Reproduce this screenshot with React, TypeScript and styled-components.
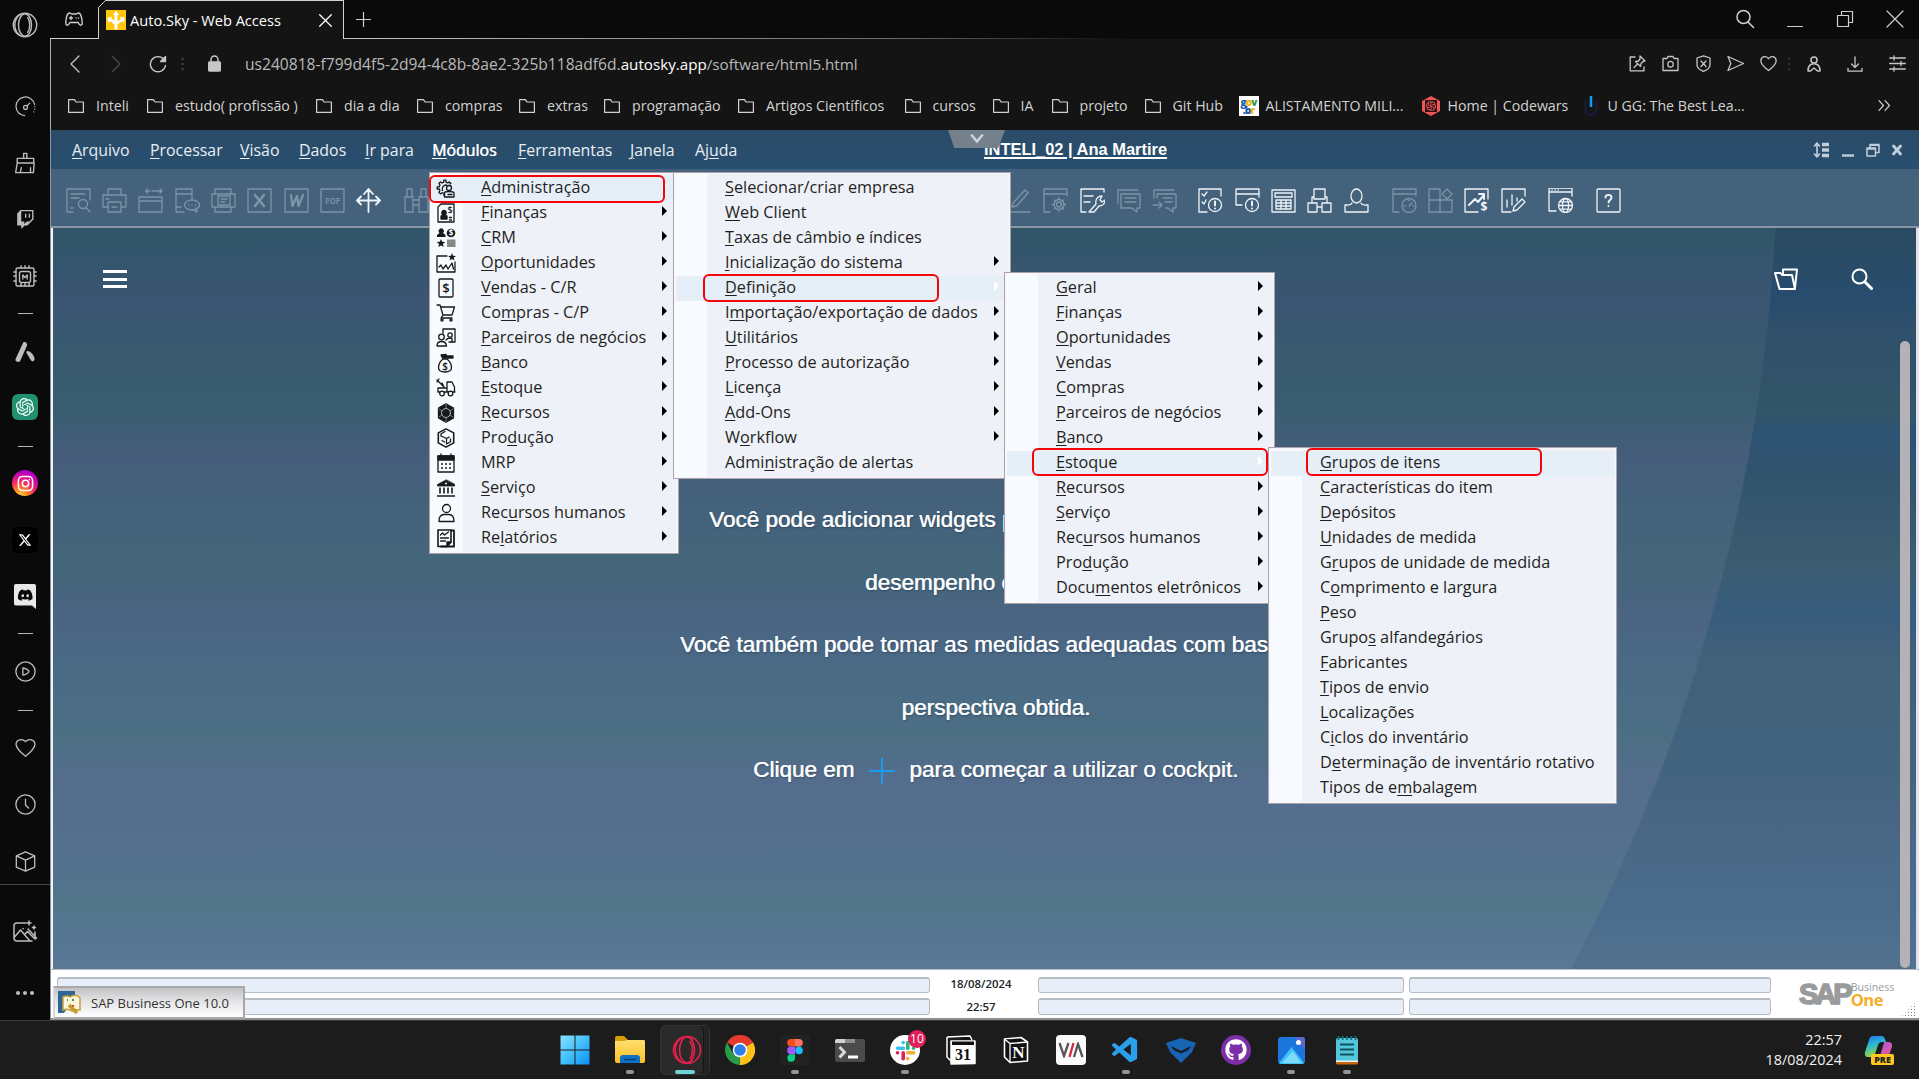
import React from 'react';
import styled, { createGlobalStyle, css } from 'styled-components';
import { SiOpenai, SiCodewars } from 'react-icons/si';
import { FaDiscord, FaGithub, FaXTwitter } from 'react-icons/fa6';
import { BsTwitch } from 'react-icons/bs';
import { VscVscode } from 'react-icons/vsc';

const uiFont = '"Open Sans", "Noto Sans", sans-serif';

const GlobalStyle = createGlobalStyle`
  *, *::before, *::after { box-sizing: border-box; }
  html, body { margin: 0; padding: 0; background: #0a0a0a; overflow: hidden; }
  body { font-family: ${uiFont}; }
  svg { display: block; flex: none; }
`;

/* ---------- generic drawing helper ---------- */

type GlyphProps = {
  size?: number;
  w?: number;
  h?: number;
  sw?: number;
  box?: string;
  fill?: string;
  children: React.ReactNode;
};

const Glyph = ({ size = 24, w, h, sw = 1.5, box = '0 0 24 24', fill = 'none', children }: GlyphProps) => (
  <svg width={w ?? size} height={h ?? size} viewBox={box} fill={fill} stroke="currentColor" strokeWidth={sw} strokeLinecap="round" strokeLinejoin="round">
    {children}
  </svg>
);

/* ---------- page ---------- */

const Screen = styled.div`
  width: 1919px;
  height: 1079px;
  display: flex;
  flex-direction: column;
  position: relative;
  overflow: hidden;
  background: #0a0a0a;
`;

const Desktop = styled.div`
  display: flex;
  height: 1020px;
`;

const Main = styled.div`
  width: 1869px;
  display: flex;
  flex-direction: column;
`;

/* ---------- browser sidebar ---------- */

const SideBar = styled.nav`
  width: 50px;
  display: flex;
  flex-direction: column;
  background: #0a0a0a;
  color: #bdbdbd;
`;

const SideSlot = styled.div<{ $h: number; $gap?: number }>`
  height: ${(p) => p.$h}px;
  margin-top: ${(p) => p.$gap ?? 0}px;
  display: flex;
  align-items: center;
  justify-content: center;
`;

const SideDash = styled.i`
  width: 15px;
  height: 1px;
  background: #b5b5b5;
`;

const SideRule = styled.div`
  height: 1px;
  background: #4a4a4a;
`;

const AppBadge = styled.span<{ $bg: string; $round?: boolean }>`
  width: 26px;
  height: 26px;
  border-radius: ${(p) => (p.$round ? '50%' : '6px')};
  background: ${(p) => p.$bg};
  color: #fff;
  display: flex;
  align-items: center;
  justify-content: center;
`;

const OperaRing = ({ size, sw }: { size: number; sw: number }) => (
  <Glyph size={size} sw={sw}>
    <circle cx="12" cy="12" r="10.8" />
    <ellipse cx="12" cy="12" rx="6" ry="10.4" />
    <path d="M7.500 2.300C3.800 5 2.600 9 2.600 12s1.200 7 4.900 9.700M14.500 5.200C15.800 7 16.400 9.500 16.400 12s-.6 5-1.900 6.800" />
  </Glyph>
);

const Chip = () => (
  <Glyph size={24} sw={1.4}>
    <rect x="3" y="3" width="18" height="18" rx="1.500" />
    <rect x="6.500" y="6.500" width="11" height="11" rx="2" />
    <path d="M8 3V.8M12 3V.8M16 3V.8M8 21v-3M16 21v-3M12 21v-3M3 7H.8M3 11H.8M3 16H.8M23.200 7H21M23.200 11H21M23.200 16H21M9.800 14v-4l2.200 2.500 2.200-2.500v4" />
  </Glyph>
);

const Sidebar = () => (
  <SideBar>
    <SideSlot $h={50}><OperaRing size={26} sw={1.300} /></SideSlot>
    <SideSlot $h={56} $gap={28}>
      <Glyph size={21} sw={1.400}>
        <path d="M11 22.500A10.700 10.700 0 1 1 22.300 9.500" /><circle cx="12" cy="13" r="2.200" /><path d="m13.600 11.400 3.200-3.200M22.500 12v.2M22.500 15v.2M21.500 18v.2" />
      </Glyph>
    </SideSlot>
    <SideSlot $h={57}>
      <Glyph size={22} sw={1.500}>
        <path d="M10.500 7V1.500h3.500V7M3.500 7h18v5h-18zM3.500 12 1.800 22.500h19.400L22 12M7 22l1-5M18 22v-5" />
      </Glyph>
    </SideSlot>
    <SideSlot $h={57}><BsTwitch size={19} /></SideSlot>
    <SideSlot $h={57}><Chip /></SideSlot>
    <SideSlot $h={17}><SideDash /></SideSlot>
    <SideSlot $h={60}>
      <Glyph size={20} sw={0} box="0 0 20 20">
        <path fill="currentColor" d="M8.200.6c1-1 3-.4 3.400 1l.6 1.400L5.200 19c-.6 1.300-4 1.200-4.700-.4-.2-.6 0-1.400.3-2zM11.500 11c-.4-1.200.4-2.200 1.500-2 3.500.8 6 4.500 6.500 7.500.3 2-1.600 3.600-3.300 2.300z" />
      </Glyph>
    </SideSlot>
    <SideSlot $h={46} $gap={2}><AppBadge $bg="#1f9170"><SiOpenai size={18} /></AppBadge></SideSlot>
    <SideSlot $h={28} $gap={2}><SideDash /></SideSlot>
    <SideSlot $h={46}>
      <AppBadge $round $bg="radial-gradient(circle at 30% 105%, #ffc93c 8%, #ff8a1c 24%, #fb2b5d 46%, #c800b4 72%, #7a12e0 95%)">
        <Glyph size={17} sw={2.200}><rect x="2" y="2" width="20" height="20" rx="6" /><circle cx="12" cy="12" r="4.500" /><path d="M17.500 6.300v.2" /></Glyph>
      </AppBadge>
    </SideSlot>
    <SideSlot $h={67}><AppBadge $bg="#000"><FaXTwitter size={14} /></AppBadge></SideSlot>
    <SideSlot $h={46}>
      <Glyph size={26} sw={0} box="0 0 26 26">
        <path fill="#e8e8e8" d="M4 1h18c1.300 0 2 .7 2 2v23l-4-3.500H4c-1.300 0-2-.7-2-2V3c0-1.300.7-2 2-2z" />
        <g transform="translate(5.200 4.200)"><FaDiscord size={16} color="#0a0a0a" /></g>
      </Glyph>
    </SideSlot>
    <SideSlot $h={28}><SideDash /></SideSlot>
    <SideSlot $h={48}><Glyph size={21} sw={1.500}><circle cx="12" cy="12" r="11" /><path d="M9 8v8c4-.5 6-2 7-4-1-2-3-3.500-7-4z" /></Glyph></SideSlot>
    <SideSlot $h={30}><SideDash /></SideSlot>
    <SideSlot $h={44}>
      <Glyph size={21} sw={1.500}><path d="M12 22C7 18 1.200 13.500 1.200 8.300 1.200 3 8.500 1 12 5.300 15.500 1 22.800 3 22.800 8.300 22.800 13.500 17 18 12 22z" /></Glyph>
    </SideSlot>
    <SideSlot $h={70}><Glyph size={21} sw={1.500}><circle cx="12" cy="12" r="11" /><path d="M12 6v6.500l3.500 3.500" /></Glyph></SideSlot>
    <SideSlot $h={45}><Glyph size={21} sw={1.500}><path d="m12 1 10.500 4.500v13L12 23 1.500 18.500v-13zM1.500 5.500 12 10.500l10.500-5M12 10.500V23" /></Glyph></SideSlot>
    <SideRule />
    <SideSlot $h={93}>
      <Glyph size={24} sw={1.500}><path d="M13 3H4Q1 3 1 6v12q0 3 3 3h15M1.500 17l6-7L17 21M12 14l2.500-2.500L22 19V12M15 9l9 9.500" /><path d="M10 8.500v.2M16 1v4M14 3h4M21 6v3M19.500 7.500h3" /></Glyph>
    </SideSlot>
    <SideSlot $h={30}><Glyph w={20} h={6} box="0 0 20 6" sw={0} fill="currentColor"><circle cx="3" cy="3" r="2" /><circle cx="10" cy="3" r="2" /><circle cx="17" cy="3" r="2" /></Glyph></SideSlot>
  </SideBar>
);

/* ---------- browser chrome ---------- */

const TabStrip = styled.header`
  height: 39px;
  display: flex;
  align-items: stretch;
  color: #cfcfcf;
`;

const GameCorner = styled.div`
  width: 48px;
  display: flex;
  align-items: center;
  justify-content: center;
  border-bottom: 1px solid #d0d0d0;
`;

const Tab = styled.div`
  width: 246px;
  display: flex;
  align-items: center;
  padding: 0 11px 0 7px;
  border: 1px solid #d0d0d0;
  border-bottom: 0;
  background: #141414;
  color: #fff;
  position: relative;
  &::before {
    content: '';
    position: absolute;
    left: -1px;
    top: -1px;
    width: 8px;
    height: 8px;
    background: linear-gradient(135deg, #0a0a0a 5px, #d0d0d0 5px, #d0d0d0 6px, transparent 6px);
  }
`;

const TabTitle = styled.span`
  flex: 1;
  padding-left: 4px;
  font-size: 14.600px;
  white-space: nowrap;
`;

const StripRest = styled.div`
  flex: 1;
  display: flex;
  align-items: center;
  padding: 0 14px 0 12px;
  border-bottom: 1px solid;
  border-image: linear-gradient(90deg, #c4c4c4, #6a6a6a 35%, #0a0a0a 50%) 1;
`;

const Spacer = styled.span`
  flex: 1;
`;

const WindowButtons = styled.div`
  display: flex;
  gap: 30px;
  align-items: center;
`;

const AddressBar = styled.div`
  height: 51px;
  display: flex;
  align-items: center;
  background: #141414;
  padding: 0 1px 2px 13px;
  color: #c6c6c6;
  border-left: 1px solid #b0b0b0;
`;

const NavButton = styled.span<{ $w: number; $dim?: boolean }>`
  width: ${(p) => p.$w}px;
  display: flex;
  justify-content: center;
  color: ${(p) => (p.$dim ? '#4a4a4a' : '#c6c6c6')};
`;

const Url = styled.span`
  margin-left: 11px;
  font-size: 15.600px;
  color: #b9b9b9;
  white-space: nowrap;
`;

const UrlPart = styled.span<{ $host?: boolean }>`
  font-size: 15.200px;
  color: ${(p) => (p.$host ? '#fff' : 'inherit')};
`;

const AddressActions = styled.div`
  display: flex;
  align-items: center;
`;

const Bookmarks = styled.div`
  height: 40px;
  display: flex;
  align-items: center;
  padding: 0 28px 9px 17px;
  background: #141414;
  border-left: 1px solid #b0b0b0;
  color: #d2d2d2;
`;

const Bookmark = styled.div<{ $site?: boolean }>`
  display: flex;
  align-items: center;
  gap: ${(p) => (p.$site ? 7 : 12)}px;
  margin-right: ${(p) => (p.$site ? 16 : 18)}px;
`;

const BookmarkLabel = styled.span<{ $w: number }>`
  width: ${(p) => p.$w}px;
  font-size: 14.200px;
  white-space: nowrap;
`;

const SiteIcon = styled.span<{ $bg?: string }>`
  width: 20px;
  height: 20px;
  background: ${(p) => p.$bg ?? 'transparent'};
  display: flex;
  align-items: center;
  justify-content: center;
`;

const GovMark = styled.span`
  display: grid;
  font: 800 10px/8px ${uiFont};
  letter-spacing: -0.800px;
  color: #1c57b8;
  text-align: center;
`;

const GovTint = styled.span<{ $c: string }>`
  color: ${(p) => p.$c};
`;

const folders: [string, number][] = [
  ['Inteli', 33], ['estudo( profissão )', 123], ['dia a dia', 55], ['compras', 56], ['extras', 39], ['programação', 88],
  ['Artigos Científicos', 120.500], ['cursos', 42], ['IA', 13], ['projeto', 47], ['Git Hub', 48],
];

const BrowserChrome = () => (
  <>
    <TabStrip>
      <GameCorner>
        <Glyph w={18} h={15} box="0 0 18 15" sw={1.400}><path d="M4.500 1C2 1 .8 7 .8 11c0 3 2.500 3 4-.5h8.400c1.500 3.500 4 3.500 4 .5 0-4-1.200-10-3.700-10-1.200 0-1.500 1-2.500 1H7C6 2 5.700 1 4.500 1zM6 4.500v3M4.500 6h3M11 6h.1M13.500 6h.1" /></Glyph>
      </GameCorner>
      <Tab>
        <Glyph size={20} sw={0} box="0 0 20 20">
          <rect width="20" height="20" fill="#ffc60a" />
          <path fill="#fff" d="M8.500 19.500v-5L4 11l-1 2.500L.8 8 6 6.500 5 8.500l3.500 2V5H6.800L10 .8 13.200 5h-1.700v6.500L15 9l-1.200-2L19 7.500 17.500 13l-1.300-2-4.700 3.500v5z" />
        </Glyph>
        <TabTitle>Auto.Sky - Web Access</TabTitle>
        <Glyph size={13} sw={1.300} box="0 0 13 13"><path d="m.7.700 11.600 11.600M12.300.700.7 12.300" /></Glyph>
      </Tab>
      <StripRest>
        <Glyph size={15} sw={1.200} box="0 0 15 15"><path d="M7.500.5v14M.5 7.500h14" /></Glyph>
        <Spacer />
        <WindowButtons>
          <Glyph size={20} sw={1.500} box="0 0 20 20"><circle cx="8.500" cy="8" r="6.500" /><path d="m13 13 5.500 5.500" /></Glyph>
          <Glyph w={20} h={18} box="0 0 20 18" sw={1.200}><path d="M2.500 16.500h15" /></Glyph>
          <Glyph size={20} sw={1.200} box="0 0 20 20"><path d="M2.500 6.500h11v11h-11zM6.500 6V2.500h11v11H14" /></Glyph>
          <Glyph size={20} sw={1.200} box="0 0 20 20"><path d="m2 2 16 16M18 2 2 18" /></Glyph>
        </WindowButtons>
      </StripRest>
    </TabStrip>
    <AddressBar>
      <NavButton $w={22}><Glyph size={18} sw={1.300} box="0 0 18 18"><path d="M13 1 5 9l8 8" /></Glyph></NavButton>
      <NavButton $w={60} $dim><Glyph size={18} sw={1.300} box="0 0 18 18"><path d="m5 1 8 8-8 8" /></Glyph></NavButton>
      <NavButton $w={24}><Glyph size={18} sw={1.400} box="0 0 18 18"><path d="M16.500 10.500A7.600 7.600 0 1 1 15 4.500" /><path fill="currentColor" d="M16.500 1.500V6.500H11.500z" /></Glyph></NavButton>
      <NavButton $w={24} $dim><Glyph w={3} h={14} box="0 0 3 14" sw={0}><path fill="#333" d="M0 1h3v2H0zM0 6h3v2H0zM0 11h3v2H0z" /></Glyph></NavButton>
      <NavButton $w={40}><Glyph w={13} h={17} box="0 0 13 17" sw={1.500}><rect x=".7" y="7" width="11.600" height="9" rx="1" fill="currentColor" /><path d="M3 7V4.500a3.500 3.500 0 0 1 7 0V7" /></Glyph></NavButton>
      <Url>us240818-f799d4f5-2d94-4c8b-8ae2-325b118adf6d.<UrlPart $host>autosky.app</UrlPart><UrlPart>/software/html5.html</UrlPart></Url>
      <Spacer />
      <AddressActions>
        <NavButton $w={33}><Glyph size={17} sw={1.300} box="0 0 17 17"><path d="M6 2H1.200v13.800H15V12M11 1l5 5-2 .5-2 2-.5 3-5-5 3-.500 1.500-2zM8.500 9 5 12.500" /></Glyph></NavButton>
        <NavButton $w={33}><Glyph size={17} sw={1.300} box="0 0 17 17"><path d="M1 3.500h4L6 1.500h5l1 2h4v12H1z" /><ellipse cx="8.500" cy="9.300" rx="2.700" ry="2.900" /></Glyph></NavButton>
        <NavButton $w={32}><Glyph size={17} sw={1.300} box="0 0 17 17"><path d="M8.500.8 15 3v7c0 3-3 5-6.500 6.400C5 15 2 13 2 10V3zM6 6l5 5.500M11 6l-5 5.500" /></Glyph></NavButton>
        <NavButton $w={33}><Glyph size={17} sw={1.300} box="0 0 17 17"><path d="m1 1.500 15.500 7-15.500 7 2.800-7z" /></Glyph></NavButton>
        <NavButton $w={32}><Glyph size={17} sw={1.300} box="0 0 24 24"><path strokeWidth="1.800" d="M12 22C7 18 1.200 13.500 1.200 8.300 1.200 2 9 0 12 5.300 15 0 22.800 2 22.800 8.300 22.800 13.500 17 18 12 22z" /></Glyph></NavButton>
        <NavButton $w={10} $dim><Glyph w={3} h={14} box="0 0 3 14" sw={0}><path fill="#333" d="M0 1h2v2H0zM0 6h2v2H0zM0 11h2v2H0z" /></Glyph></NavButton>
        <NavButton $w={40}><Glyph w={14} h={16} box="0 0 14 16" sw={1.500}><circle cx="7" cy="4" r="3" /><path d="M3.500 15H1c0-5 2.500-7.300 6-7.300S13 10 13 15h-2.500l-3.500-3z" /></Glyph></NavButton>
        <NavButton $w={42}><Glyph size={16} sw={1.300} box="0 0 16 16"><path d="M8 .8v10.700M4.500 8 8 11.500 11.500 8M1 12.500v2.700h14v-2.700" /></Glyph></NavButton>
        <NavButton $w={42}><Glyph size={17} sw={1.300} box="0 0 17 17"><path d="M.7 3h15.600M.7 8.500h15.600M.7 14h15.600M5 .800v4.400M12 6.300v4.400M5 11.800v4.400" /></Glyph></NavButton>
      </AddressActions>
    </AddressBar>
    <Bookmarks>
      {folders.map(([label, w]) => (
        <Bookmark key={label}>
          <Glyph w={16} h={14} sw={1.200} box="0 0 16 14"><path d="M.6.700h5.900l1.500 2.300h7.400v10.300H.6z" /></Glyph>
          <BookmarkLabel $w={w}>{label}</BookmarkLabel>
        </Bookmark>
      ))}
      <Bookmark $site>
        <SiteIcon $bg="#fff"><GovMark><span>g<GovTint $c="#f0b400">o</GovTint><GovTint $c="#2a9a4b">v</GovTint></span><span>.b<GovTint $c="#f0b400">r</GovTint></span></GovMark></SiteIcon>
        <BookmarkLabel $w={139}>ALISTAMENTO MILI...</BookmarkLabel>
      </Bookmark>
      <Bookmark $site>
        <SiteIcon>
          <Glyph size={20} sw={0} box="0 0 20 20"><path fill="#f05656" d="M10 0l9 5v10l-9 5-9-5V5z" /><g transform="translate(4 4)"><SiCodewars size={12} color="#2b1212" /></g></Glyph>
        </SiteIcon>
        <BookmarkLabel $w={117}>Home | Codewars</BookmarkLabel>
      </Bookmark>
      <Bookmark $site>
        <SiteIcon><Glyph w={14} h={20} box="0 0 14 20" sw={2.500}><path stroke="#1a1a38" d="M1.500 6v7c0 4 2 5.500 5.500 5.500s5.500-1.500 5.500-5.500V6" /><path stroke="#109cf5" strokeLinecap="butt" d="M7 0v11" /></Glyph></SiteIcon>
        <BookmarkLabel $w={136}>U GG: The Best Lea...</BookmarkLabel>
      </Bookmark>
      <Spacer />
      <Glyph w={13} h={11} box="0 0 13 11" sw={1.200}><path d="m1 .7 4.500 4.800L1 10.300M7 .7l4.500 4.800L7 10.300" /></Glyph>
    </Bookmarks>
  </>
);

/* ---------- SAP window ---------- */

const SapWindow = styled.section`
  height: 890px;
  display: flex;
  flex-direction: column;
  padding-left: 1px;
  background: #8795a5;
`;

const MenuBar = styled.div`
  height: 39px;
  display: flex;
  align-items: center;
  background: linear-gradient(#2b4c68, #284e6f);
  padding: 1px 15px 0 21px;
  color: #e9eef3;
`;

const MenuBarItem = styled.span<{ $w: number; $open?: boolean }>`
  width: ${(p) => p.$w}px;
  margin-right: 18px;
  font-size: 15.900px;
  white-space: nowrap;
  ${(p) => p.$open && css`
    color: #fff;
    text-shadow: 0.500px 0 0 #fff;
  `}
`;

const Mnemonic = styled.u`
  text-decoration-thickness: 1px;
  text-underline-offset: 2px;
`;

const CompanySlot = styled.div`
  flex: 1;
  display: flex;
  align-items: flex-start;
  align-self: stretch;
  padding-left: 192px;
`;

const PullTab = styled.span`
  width: 57px;
  height: 18px;
  margin-top: -1px;
  display: flex;
  align-items: center;
  justify-content: center;
  background: #74808c;
  color: #ccd3d9;
  clip-path: polygon(0 0, 100% 0, 88% 100%, 11% 100%);
`;

const CompanyLabel = styled.strong`
  margin: 9px 0 0 -21px;
  font: 700 16.450px/18px "Liberation Sans", sans-serif;
  color: #fff;
  text-decoration: underline;
  text-decoration-thickness: 2px;
  text-underline-offset: 2px;
  white-space: nowrap;
`;

const InnerButtons = styled.div`
  display: flex;
  align-items: center;
  gap: 10px;
  color: #c2cfdb;
`;

const ToolBar = styled.div`
  height: 57px;
  display: flex;
  align-items: center;
  padding: 6px 0 0 9px;
  background: #44627b;
`;

const ToolGroup = styled.div<{ $gap: number }>`
  display: flex;
  margin-right: ${(p) => p.$gap}px;
`;

const Tool = styled.span<{ $dim?: boolean }>`
  width: 36.350px;
  display: flex;
  justify-content: center;
  color: ${(p) => (p.$dim ? '#7d94a9' : '#eef4f9')};
`;

const mark = (label: string) => {
  const i = label.indexOf('&');
  if (i < 0) return label;
  return (
    <>
      {label.slice(0, i)}
      <Mnemonic>{label[i + 1]}</Mnemonic>
      {label.slice(i + 2)}
    </>
  );
};

const menuBar: [string, number, boolean?][] = [
  ['&Arquivo', 60], ['&Processar', 72], ['&Visão', 41], ['&Dados', 48], ['&Ir para', 49], ['&Módulos', 68, true],
  ['&Ferramentas', 94], ['&Janela', 47], ['Aj&uda', 43],
];

const T = ({ children }: { children: React.ReactNode }) => <Glyph size={25} sw={1.300} box="0 0 25 25">{children}</Glyph>;
const page = 'M7 24H1V1h23v7';

const leftTools: [string, React.ReactNode, boolean?][] = [
  ['preview', <><path d={page + 'v4M5 6h14M5 10h8M5 20h2'} /><circle cx="17" cy="16" r="4.500" /><path d="m20 19.500 4 4.500" /></>],
  ['print', <><path d="M6 7V1h13v6M6 19H1V7h23v12h-5M4 11h3M6 14h13v10H6zM10 19h5" /></>],
  ['mail', <><path d="M1 9h23v15H1zM1 13h23M8 3h-.5l2-2M7.500 3l2 2M7.500 3H12M14 3h10M22 1l2 2-2 2" /></>],
  ['sms', <><path d="M9 24H1V1h16v10M1 6h16M1 19h5" /><ellipse cx="17" cy="17" rx="7.500" ry="5" /><path d="M13.500 17h.1M17 17h.1M20.500 17h.1M18 22l4 2-1-4" /></>],
  ['fax', <><path d="M4 6V1h16v5M1 6h23v13H1zM4 19v5h16v-5M7 8h12v9H7zM10 11h6M10 14h4" /></>],
  ['excel', <><path d="M1 1h23v23H1z" /><path strokeWidth="2.600" d="m8 7 9 11M17 7 8 18" /></>],
  ['word', <><path d="M1 1h23v23H1z" /><path strokeWidth="2.200" d="m7 7 1.500 11L13 8l1.500 10L19 7" /></>],
  ['pdf', <><path d="M1 1h23v23H1z" /><text x="12.500" y="15.500" textAnchor="middle" fontFamily="Open Sans, sans-serif" fontSize="8" fontWeight="600" fill="currentColor" stroke="none">PDF</text></>],
  ['move', <><path strokeWidth="1.800" d="M12.500 24V1M8 6l4.500-5L17 6M1 12.500h23M5 8.500l-4 4 4 4M20 8.500l4 4-4 4" /></>, true],
];

const rightTools: { gap: number; tools: [string, React.ReactNode, boolean?][] }[] = [
  { gap: 9.500, tools: [
    ['edit', <><path d="m6 15 12-13 3 3L9.500 18 5 19zM1 24h22" /></>],
    ['form', <><path d="M7 24H1V1h23v7M1 6h23" /><circle cx="16" cy="16.500" r="2.500" /><path d="M16 11v-1.500M16 23.500V22M9.500 16.500H11M21 16.500h1.500M11.500 12l1 1M19.500 20l1 1M11.500 21l1-1M19.500 13l1-1" /><circle cx="16" cy="16.500" r="5" /></>],
    ['tools', <><path d="M6 24H1V1h23v3M4 8h9M4 14h6M9 24l7-8c-1-5 2-8 6-8l-2 4 2 2 3-2c0 4-3 6-6 6l-5 6z" /></>, true],
    ['note', <><path d="M2 15V2h20M5 6h19v14h-3v4l-5-4H5zM9 10h11M9 14h11" /></>],
    ['note2', <><path d="M2 10V2h20M5 10V6h19v14h-3v4l-5-4h-2M11 10h9M13 14h7M1 17h9M7 14l3 3-3 3" /></>],
  ] },
  { gap: 11.500, tools: [
    ['checks', <><path d="M9 24H1V1h22v7M4 6l2 2 3-4M4 14l2 2 2-4" /><circle cx="17" cy="17" r="6.500" /><path strokeWidth="2" d="M17 13.500v4M17 20.500v.1" /></>, true],
    ['alert', <><path d="M7 17H1V1h23v8M1 6h23" /><circle cx="17" cy="17" r="6.500" /><path strokeWidth="2" d="M17 13.500v4M17 20.500v.1" /></>, true],
    ['calc', <><path d="M1 2h23v22H1zM4 5h17v4H4zM5 12h15v9H5zM5 15h15M5 18h15M10 12v9M15 12v9" /></>, true],
    ['org', <><path d="M7 1h11v10H7zM1 15h9v9H1zM15 15h9v9h-9zM10 19h5M5 15V9h2M20 15V9h-2" /></>, true],
    ['stamp', <><ellipse cx="12.500" cy="8" rx="5.500" ry="7" /><path d="M8 15c-1 2.500-3 2-7 2v7h23v-7c-4 0-6 .5-7-2" /></>, true],
  ] },
  { gap: 11, tools: [
    ['sched', <><path d="M7 24H1V1h23v7M1 6h23" /><circle cx="17" cy="17.500" r="7" /><path d="M17 18l3-3M17 12v1M12 18h1M21 18h1" /></>],
    ['widgets', <><path d="M1 1h11v11H1zM1 12h11v12H1zM12 12h12v12H12zM19 1l5 5-5 5-5-5z" /></>],
    ['sales', <><path d="M14 24H1V1h23v10" /><path strokeWidth="2" d="m5 17 6-6 3 3 6-7M15 6h5v5" /><text x="20" y="23" textAnchor="middle" fontFamily="Open Sans, sans-serif" fontSize="12" fontWeight="700" fill="currentColor" stroke="none">$</text></>, true],
    ['report', <><path d="M10 24H1V1h23v7M6 19v-7M11 17V7M16 13v-3M12 23l1-4 8-8 3 3-8 8z" /></>, true],
  ] },
  { gap: 12, tools: [['web', <><path d="M8 23H1V0h23v8M1 4h23" /><path strokeWidth="1.500" d="M4 2h.1M7 2h.1M10 2h.1" /><circle cx="17.500" cy="17.500" r="7" /><ellipse cx="17.500" cy="17.500" rx="3" ry="7" /><path d="M10.700 17.500h13.600M12 13.800h11M12 21.200h11" /></>, true]] },
  { gap: 0, tools: [['help', <><rect x="1" y="1" width="23" height="23" rx="1" /><path strokeWidth="1.900" d="M9.500 9.500C9.500 6 15.500 6 15.500 9.500c0 2.500-3 2.500-3 5M12.500 18v.1" /></>, true]] },
];

const Workspace = styled.div`
  height: 741px;
  display: flex;
  align-items: flex-start;
  position: relative;
  margin-top: 2px;
  border-left: 2px solid #f2f4f7;
  border-right: 3px solid #e2e4ea;
  background: linear-gradient(#31566a 0, #32566b 14px, #3b5573 75px, #38596f 112px, #3a5d72 185px, #455d7b 228px, #44617b 265px, #45667b 345px, #4a6482 385px, #4a6985 430px, #4c6f84 510px, #546d8d 550px, #53718e 640px, #53768b 675px, #567694 715px, #5b7897 741px);
`;

const Shade = styled.div`
  position: absolute;
  inset: 0;
  background: linear-gradient(#2a4a61 0, #2a4b62 14px, #284c6e 66px, #2f4f6b 100px, #325568 185px, #2d5374 205px, #31546d 250px, #3b5b70 330px, #375c7d 385px, #41607a 430px, #42647e 540px, #496684 590px, #4a6c8c 680px, #52718f 741px);
  mask-image: radial-gradient(circle at -60px -93px, transparent 1784px, #000 1785.500px);
`;

const MenuToggle = styled.span`
  position: relative;
  width: 24px;
  height: 18px;
  margin: 42px 0 0 50px;
  border-top: 3px solid #fff;
  border-bottom: 3px solid #fff;
  display: flex;
  align-items: center;
  &::before { content: ''; width: 24px; height: 3px; background: #fff; }
`;

const Cockpit = styled.div`
  position: relative;
  flex: none;
  width: 1200px;
  margin: 261px 0 0 215px;
  color: #fff;
  font: 22.500px/62.500px "Liberation Sans", sans-serif;
  text-shadow: 0.700px 0 0 rgba(255, 255, 255, 0.800), 1px 1px 2px rgba(20, 40, 70, 0.5);
`;

const CockpitLine = styled.p<{ $indent: number }>`
  margin: 0;
  height: 62.500px;
  display: flex;
  align-items: center;
  padding-left: ${(p) => p.$indent}px;
  white-space: nowrap;
`;

const PlusGap = styled.span`
  margin: 1px 14px 0 15px;
  color: #1a9bf0;
`;

const CornerTools = styled.div`
  position: absolute;
  top: 40px;
  right: 43px;
  display: flex;
  gap: 53px;
  color: #fff;
`;

const ScrollThumb = styled.div`
  position: absolute;
  right: 6px;
  top: 113px;
  width: 10px;
  height: 627px;
  border-radius: 5px;
  background: #b4b2b6;
`;

const StatusBar = styled.footer`
  height: 51px;
  display: flex;
  align-items: center;
  padding: 3px 3px 0 6px;
  background: #fff;
  border-top: 1px solid #b5bcc4;
  border-bottom: 2px solid #8f8f8f;
  position: relative;
`;

const StatusPair = styled.div<{ $w: number }>`
  width: ${(p) => p.$w}px;
  height: 38px;
  margin-right: 5px;
  display: grid;
  gap: 5px;
`;

const StatusField = styled.span`
  border: 1px solid #b7bdc4;
  border-width: 2px 1px 1px;
  border-radius: 3px;
  background: #e7eef7;
`;

const StatusClock = styled.div`
  width: 92px;
  margin-right: 11px;
  height: 45px;
  display: grid;
  align-items: center;
  text-align: center;
  font: 600 11.400px/20px ${uiFont};
  color: #222;
`;

const SapBrand = styled.div`
  display: flex;
  align-items: center;
  margin-left: 23px;
  padding-bottom: 3px;
`;

const SapWord = styled.span`
  font: 700 29px/24px "Liberation Sans", sans-serif;
  letter-spacing: -3px;
  color: #9a9b9d;
  -webkit-text-stroke: 1.600px #9a9b9d;
`;

const SapProduct = styled.span`
  display: grid;
  margin-left: 1px;
  font: 10.600px/12px ${uiFont};
  color: #9a9b9d;
`;

const SapOne = styled.b`
  font: 700 16.500px/14px ${uiFont};
  letter-spacing: -0.400px;
  color: #f4ae27;
`;

const WindowButton = styled.div`
  position: absolute;
  left: 2px;
  bottom: -1px;
  width: 192px;
  height: 33px;
  display: flex;
  align-items: center;
  gap: 9px;
  padding-left: 3px;
  border: 2px solid #a8a8aa;
  border-left-color: #d8d8da;
  background: linear-gradient(#c2c2c4, #e4e4e6 45%, #fff);
  font-size: 13px;
  color: #333;
  white-space: nowrap;
`;

const Grip = styled.span`
  position: absolute;
  right: 3px;
  bottom: 1px;
  width: 15px;
  height: 15px;
  background: radial-gradient(#777 38%, transparent 42%) 0 0 / 3px 3px;
  clip-path: polygon(100% 0, 100% 100%, 0 100%);
`;

/* ---------- cascading menus ---------- */

const Cascade = styled.div<{ $x: number; $y: number; $w: number }>`
  position: absolute;
  left: ${(p) => p.$x}px;
  top: ${(p) => p.$y}px;
  width: ${(p) => p.$w}px;
  padding: 3px 2px 2px;
  border: 1px solid #a9a4ab;
  box-shadow: inset 0 0 0 1px #f8f4f7;
  background: linear-gradient(90deg, #f7faff 33px, #eef1f7 33px);
`;

const CascadeRow = styled.div<{ $active?: boolean }>`
  height: 25px;
  display: flex;
  align-items: center;
  padding: 0 9px 2px 0;
  background: ${(p) => (p.$active ? '#e6eff7' : 'transparent')};
  color: #1f1f22;
`;

const RowIcon = styled.span`
  width: 49px;
  padding-left: 4px;
  flex: none;
  color: #17181a;
`;

const RowLabel = styled.span`
  flex: 1;
  font-size: 16.250px;
  line-height: 23px;
  white-space: nowrap;
`;

const RowArrow = styled.i<{ $active?: boolean }>`
  margin-top: -4px;
  border: 5px solid transparent;
  border-left: 5px solid ${(p) => (p.$active ? '#fff' : '#000')};
  border-right: 0;
`;

const RedFrame = styled.span<{ $x: number; $y: number }>`
  position: absolute;
  left: ${(p) => p.$x}px;
  top: ${(p) => p.$y}px;
  width: 236px;
  height: 28px;
  border: 2px solid #f40509;
  border-radius: 6px;
`;

type Entry = { label: string; sub?: boolean; active?: boolean; icon?: React.ReactNode };
const list = (text: string, flat: string[] = [], active = ''): Entry[] =>
  text.split('|').map((label) => ({ label, sub: !flat.includes(label), active: label === active }));

const M = ({ children }: { children: React.ReactNode }) => <Glyph size={20} sw={1.300} box="0 0 20 20">{children}</Glyph>;
const Dollar = ({ x, y, s }: { x: number; y: number; s: number }) => (
  <text x={x} y={y} textAnchor="middle" fontFamily="Open Sans, sans-serif" fontWeight="600" fontSize={s} fill="currentColor" stroke="none">$</text>
);

const moduleIcons: React.ReactNode[] = [
  <M><path strokeWidth="1.300" d="M8 17.500v-2l-2-.8-1.600 1.200-1.500-1.500L4 12.500 3.300 11H1.200V8.800h2.100L4 7 2.900 5.400l1.500-1.500L6 5l1.800-.800V2.200H10v2l1.800.8 1.600-1.100 1.500 1.500L14 6" /><path d="M6.500 12.500a4 4 0 0 1 4-5.500" /><circle cx="13" cy="10" r="2.500" /><path d="M8.500 19v-4q0-1.500 4.500-1.500t5 1.500v4zM12 16.500h4" /></M>,
  <M><path d="M5 1h13v18H2V4z" /><path fill="currentColor" d="M5 16v-3l2-1a2 2.500 0 1 1 2 0l2 1v3z" /><path d="M13.500 14.500h2M13.500 17h2" /><Dollar x={14} y={10} s={9} /></M>,
  <M><path fill="currentColor" stroke="none" d="M1 9V7l2.500-2a2.600 2.600 0 1 1 3.500 0L9.500 7v2zM5 11l1.200 2.800 3 .2-2.300 2 .8 3L5 17.500 2.300 19l.8-3-2.300-2 3-.200z" /><circle cx="15" cy="5" r="4.300" fill="currentColor" stroke="none" /><text x="15" y="8" textAnchor="middle" fontSize="8" fontWeight="700" fontFamily="Open Sans, sans-serif" fill="#fff" stroke="none">$</text><path fill="#888" stroke="none" d="M11 11.500h8.500V19H11z" /></M>,
  <M><path d="M11 3H1v16h18V9M3 14l2-2 2 4 3-4 2 4 4-6 1.500 6" /><path fill="currentColor" stroke="none" d="m16 0 1 2.700 3 .2-2.300 1.800.8 2.900L16 6l-2.500 1.600.8-2.900L12 2.900l3-.2z" /></M>,
  <M><rect x="3" y="1" width="14" height="18" rx="1" /><Dollar x={10} y={14.500} s={13} /></M>,
  <M><path d="M1 2h3l3 10h9l2.500-8M18.500 4H5M7 12l-2 3h11" /><circle cx="6" cy="17" r="1.100" /><circle cx="15" cy="17" r="1.100" /></M>,
  <M><path d="M7 5V1h12v13h-6" /><circle cx="5.500" cy="9" r="2.800" /><circle cx="14" cy="7" r="2.200" /><path d="M1 18q0-4.500 4.500-4.500T10.500 18zM10 12q2-2.500 6-1.500V14" /></M>,
  <M><path d="M7 6C3.500 9 2.500 12 2.500 14.500 2.500 18 5 19 9 19s6.500-1 6.500-4.500C15.500 12 14.500 9 11 6z" /><path fill="currentColor" d="M6.500 5 5 2l5-.500L11 3h6v2h-6z" /><Dollar x={9} y={16.500} s={10} /></M>,
  <M><path d="M2 14v-4h9v4M11 13V4h5l2.500 5v5M2 14h17M7 8 1 2M3 1 1 4M6 5l2 4" /><circle cx="6" cy="15.500" r="2.300" fill="#f7faff" /><circle cx="14.500" cy="15.500" r="2.300" fill="#f7faff" /></M>,
  <M><path fill="currentColor" d="m10 .800 3 1.700L17.500 5v10L10 19.200 2.500 15V5z" /><circle cx="10" cy="10" r="4.500" stroke="#b9bcc0" strokeWidth=".9" /><path stroke="#b9bcc0" strokeWidth=".6" d="M10 1v4M10 15v4M3 6l3 2M17 6l-3 2M3 14l3-2M17 14l-3-2" /></M>,
  <M><path strokeWidth="1.600" d="m10 .900 7.700 4v10L10 19.100l-7.700-4.200v-10z" /><path d="M5 8V6l4-2.500M5 8l5.500 2.500V16M10.500 10.500l2.500-1.300M6 12.500l2.500 1.500M10.500 16l4-2.200v-3" /></M>,
  <M><path d="M2 3h16v16H2z" /><path fill="currentColor" d="M2 3h16v4H2zM5 1v3M15 1v3" /><path strokeWidth="1.800" d="M6 11h.1M10 11h.1M14 11h.1M6 15h.1M10 15h.1M14 15h.1" /></M>,
  <M><path fill="currentColor" strokeWidth=".8" d="M10 2 1.500 6.500V8h17V6.500z" /><circle cx="10" cy="5.500" r="1" fill="#f7faff" stroke="none" /><path strokeWidth="1.600" strokeLinecap="butt" d="M4 9.500v6M8 9.500v6M12 9.500v6M16 9.500v6" /><path d="M1.500 18h17" /></M>,
  <M><circle cx="10.500" cy="5.500" r="4" /><path d="M3 18.500c0-5 2-7 5-7h5c3 0 5 2 5 7z" /></M>,
  <M><path strokeWidth="1.800" d="M15 2.500h3V18.500H5" /><path strokeWidth="1.600" d="M2 2h13v12l-4 4.500H2z" /><path d="m4.500 7 2-2 2 2 4-3M4.500 10h8M4.500 13h5" /><path fill="currentColor" d="M11 18v-4h4z" /></M>,
];

const modules = list('&Administração|&Finanças|&CRM|&Oportunidades|&Vendas - C/R|Co&mpras - C/P|&Parceiros de negócios|&Banco|&Estoque|&Recursos|Pro&dução|&MRP|&Serviço|Rec&ursos humanos|Re&latórios', [], '&Administração')
  .map((e, i) => ({ ...e, label: e.label === '&MRP' ? 'MRP' : e.label, icon: moduleIcons[i] }));
const admin = list('&Selecionar/criar empresa|&Web Client|&Taxas de câmbio e índices|&Inicialização do sistema|&Definição|I&mportação/exportação de dados|&Utilitários|&Processo de autorização|&Licença|&Add-Ons|W&orkflow|Admi&nistração de alertas',
  ['&Selecionar/criar empresa', '&Web Client', '&Taxas de câmbio e índices', 'Admi&nistração de alertas'], '&Definição');
const setup = list('&Geral|&Finanças|&Oportunidades|&Vendas|&Compras|&Parceiros de negócios|&Banco|&Estoque|&Recursos|&Serviço|Rec&ursos humanos|Pro&dução|Docu&mentos eletrônicos', [], '&Estoque');
const stock = list('&Grupos de itens|&Características do item|&Depósitos|&Unidades de medida|G&rupos de unidade de medida|C&omprimento e largura|&Peso|Grupo&s alfandegários|&Fabricantes|&Tipos de envio|&Localizações|C&iclos do inventário|D&eterminação de inventário rotativo|Tipos de e&mbalagem', [], '&Grupos de itens')
  .map((e) => ({ ...e, sub: false }));

const Menu = ({ x, y, w, items }: { x: number; y: number; w: number; items: Entry[] }) => (
  <Cascade $x={x} $y={y} $w={w}>
    {items.map((e) => (
      <CascadeRow key={e.label} $active={e.active}>
        <RowIcon>{e.icon}</RowIcon>
        <RowLabel>{mark(e.label)}</RowLabel>
        {e.sub && <RowArrow $active={e.active} />}
      </CascadeRow>
    ))}
  </Cascade>
);

/* ---------- taskbar ---------- */

const TaskBar = styled.div`
  height: 59px;
  display: flex;
  background: #1c1c1c;
  border-top: 1px solid #3a3a3a;
  padding-left: 547px;
`;

const TaskSlot = styled.div<{ $run?: string }>`
  position: relative;
  width: 55.150px;
  height: 58px;
  display: flex;
  align-items: center;
  justify-content: center;
  ${(p) => p.$run && css`
    &::after {
      content: '';
      position: absolute;
      bottom: 5px;
      width: ${p.$run === 'on' ? 20 : 8}px;
      height: 4px;
      border-radius: 2px;
      background: ${p.$run === 'on' ? '#6fd3d8' : '#949494'};
    }
  `}
`;

const ActivePlate = styled.span`
  width: 50px;
  height: 50px;
  display: flex;
  align-items: center;
  padding-left: 11px;
  border-radius: 6px;
  border: 1px solid #333;
  box-shadow: inset -5px 0 0 #232323, inset -6px 0 0 #151515;
  background: #2a2a2a;
  color: #e5204e;
`;

const Tile = styled.span<{ $bg: string; $r?: number }>`
  width: 30px;
  height: 30px;
  border-radius: ${(p) => p.$r ?? 4}px;
  background: ${(p) => p.$bg};
  display: flex;
  align-items: center;
  justify-content: center;
`;

const CountBadge = styled.span`
  position: absolute;
  top: 9px;
  right: 7px;
  width: 18px;
  height: 18px;
  border-radius: 50%;
  background: #e01e5a;
  color: #fff;
  font: 12px/18px ${uiFont};
  text-align: center;
`;

const Tray = styled.div`
  flex: 1;
  display: flex;
  align-items: center;
  justify-content: flex-end;
  gap: 21px;
  padding-right: 24px;
`;

const TrayClock = styled.div`
  text-align: right;
  color: #f0f0f0;
  font-size: 14.400px;
  line-height: 20px;
`;

const taskApps: { name: string; run?: string; art: React.ReactNode }[] = [
  { name: 'start', art: <svg width="30" height="30" viewBox="0 0 30 30"><defs><linearGradient id="win" gradientUnits="userSpaceOnUse" x1="0" y1="0" x2="30" y2="30"><stop stopColor="#8be3ff" /><stop offset=".5" stopColor="#42c0fa" /><stop offset="1" stopColor="#0a8cf5" /></linearGradient></defs><path fill="url(#win)" d="M.5.5h14v14H.5zM15.500.5h14v14h-14zM.5 15.500h14v14H.5zM15.500 15.500h14v14h-14z" /></svg> },
  { name: 'files', run: 'idle', art: <svg width="30" height="28" viewBox="0 0 30 28"><path fill="#d79b06" d="M0 2q0-2 2-2h7l4 4v6H0z" /><defs><linearGradient id="fold" x2="0" y2="1"><stop stopColor="#ffdf70" /><stop offset="1" stopColor="#fcbf26" /></linearGradient></defs><path fill="url(#fold)" d="M0 5h9l3-1h17q1 0 1 2v19q0 2-2 2H2q-2 0-2-2z" /><path fill="#0f6fc4" d="M5 27v-5q0-3 3-3h14q3 0 3 3v5z" /><path stroke="#06427e" strokeWidth="1.500" d="M9 23.500h12" /></svg> },
  { name: 'opera', run: 'on', art: <ActivePlate><OperaRing size={30} sw={1.300} /></ActivePlate> },
  { name: 'chrome', art: <svg width="30" height="30" viewBox="0 0 30 30"><path fill="#e33b2e" d="M15 15 2 7.500a15 15 0 0 1 26 0z" /><path fill="#fbc116" d="M15 15l13-7.500a15 15 0 0 1-13.500 22.500z" /><path fill="#2a9a4b" d="M2 7.500 8.500 19l6.500 3-.5 8A15 15 0 0 1 2 7.500z" /><path fill="#e33b2e" d="M15 8H28.300L27 6H15z" /><path fill="#fbc116" d="m21.500 18.500-7 11.500H17l6-11.500z" /><circle cx="15" cy="15" r="7.300" fill="#fff" /><circle cx="15" cy="15" r="5.800" fill="#2e7de9" /></svg> },
  { name: 'figma', run: 'idle', art: <Tile $bg="#222"><svg width="16" height="23" viewBox="0 0 16 23"><path fill="#f24e1e" d="M8 0H4a3.800 3.800 0 0 0 0 7.600h4z" /><path fill="#ff7262" d="M8 0h4a3.800 3.800 0 0 1 0 7.600H8z" /><path fill="#a259ff" d="M8 7.600H4a3.800 3.800 0 0 0 0 7.600h4z" /><circle cx="12" cy="11.400" r="3.800" fill="#1abcfe" /><path fill="#0acf83" d="M8 15.200H4A3.800 3.800 0 1 0 8 19z" /></svg></Tile> },
  { name: 'terminal', art: <svg width="30" height="23" viewBox="0 0 30 23"><rect width="30" height="23" rx="2" fill="#4b4b4d" /><path fill="#d2d2d2" d="M0 4V2q0-2 2-2h8v4z" /><path fill="#8d8d8d" d="M10 0h10v4H10z" /><path stroke="#d9d9d9" strokeWidth="3" fill="none" d="m4.500 8 5 5.200-5 5.200" /><path stroke="#fff" strokeWidth="3" d="M13 18h10" /></svg> },
  { name: 'slack', run: 'idle', art: <><Tile $bg="#fff" $r={15}><svg width="21" height="21" viewBox="0 0 21 21" strokeWidth="3.600" strokeLinecap="round"><path stroke="#36c5f0" d="M2.500 8.200h6M8.200 2.500v.1" /><path stroke="#2eb67d" d="M12.800 2.500v6M18.500 8.200h.1" /><path stroke="#ecb22e" d="M12.800 12.800h6M12.800 18.500v.1" /><path stroke="#e01e5a" d="M8.200 12.800v6M2.500 12.800h.1" /></svg></Tile><CountBadge>10</CountBadge></> },
  { name: 'calendar', art: <svg width="30" height="30" viewBox="0 0 30 30"><path fill="#111" stroke="#fff" strokeWidth="1.500" strokeLinejoin="round" d="M1 2 24 1l2 4M1 2v20l4 4" /><path fill="#fff" stroke="#fff" strokeWidth="1.500" strokeLinejoin="round" d="M5 6h24v22.500L5 29z" /><path fill="#111" d="M6 6.500h22V10H6z" /><text x="17" y="25" textAnchor="middle" fontFamily="Liberation Serif, serif" fontWeight="700" fontSize="16" fill="#111">31</text></svg> },
  { name: 'notion', art: <svg width="26" height="28" viewBox="0 0 26 28"><path fill="#111" stroke="#fff" strokeWidth="1.600" strokeLinejoin="round" d="M1.500 3 18 1.500l6.500 4.500v19L7 26.500 1.500 21z" /><path fill="#111" stroke="#fff" strokeWidth="1.300" d="M1.500 3 7 7.500 24.500 6M7 7.500v19" /><text x="15.500" y="22" textAnchor="middle" fontFamily="Liberation Serif, serif" fontWeight="700" fontSize="17" fill="#fff">N</text></svg> },
  { name: 'via', art: <Tile $bg="#fafafa"><svg width="26" height="16" viewBox="0 0 26 16" fill="none" strokeWidth="2.300"><path stroke="#55555a" d="m1.500 1 4.500 13 4.500-13M16 15l4-13 4.500 13" /><path stroke="#d8263c" d="m11.500 15 4-14" /></svg></Tile> },
  { name: 'vscode', run: 'idle', art: <VscVscode size={31} color="#2a9fea" /> },
  { name: 'shield', art: <svg width="30" height="25" viewBox="0 0 30 25"><path fill="#1764b4" d="M0 5 15 0l15 5-4 9-11 11L4 14z" /><path fill="#1c1c1c" d="m5 8 10 5 10-5-2.500 4-7.500 3.500L7.500 12z" /></svg> },
  { name: 'github', art: <Tile $bg="#7d2fa8" $r={15}><FaGithub size={22} color="#fff" /></Tile> },
  { name: 'photos', run: 'idle', art: <svg width="27" height="27" viewBox="0 0 27 27"><rect width="27" height="27" rx="3" fill="#1c75dd" /><path fill="#8a5fd0" d="M16 0h8q3 0 3 3v9z" opacity=".6" /><path fill="#3cc3f7" d="M1 26 13.500 10 26 26q-1 1-2 1H3q-1.500 0-2-1z" /><path fill="#bdeefd" d="m4 26 11-12 8 12z" opacity=".5" /><circle cx="20.500" cy="5.500" r="2.500" fill="#fff" /></svg> },
  { name: 'notes', run: 'idle', art: <svg width="24" height="29" viewBox="0 0 24 29"><rect x="1" y="2" width="22" height="26" rx="2" fill="#55c5dc" /><path fill="#c9660c" d="M1 25.500h22V27q0 1.500-2 1.500H3Q1 28.500 1 27z" /><path fill="#e8f4f7" d="M1 24.500h22V26H1z" /><path stroke="#10525f" strokeWidth="2" d="M5 8.500h14M5 13.500h14M5 18.500h14" /><path stroke="#0f6f83" strokeWidth="1.700" d="M3.500 0v4M7.700 0v4M12 0v4M16.300 0v4M20.500 0v4" /></svg> },
];

export default function App() {
  return (
    <Screen>
      <GlobalStyle />
      <Desktop>
        <Sidebar />
        <Main>
          <BrowserChrome />
          <SapWindow>
            <MenuBar>
              {menuBar.map(([label, w, open]) => <MenuBarItem key={label} $w={w} $open={open}>{mark(label)}</MenuBarItem>)}
              <CompanySlot>
                <PullTab><Glyph w={14} h={10} box="0 0 14 10" sw={2.600}><path d="m2 1.500 5 6 5-6" /></Glyph></PullTab>
                <CompanyLabel>INTELI_02 | Ana Martire</CompanyLabel>
              </CompanySlot>
              <InnerButtons>
                <Glyph w={17} h={16} box="0 0 17 16" sw={1.600}><path d="M4 1v14M1.500 4 4 1l2.500 3M1.500 12 4 15l2.500-3" /><path strokeWidth="3.600" strokeLinecap="butt" d="M9 2.500h7M9 8h7M9 13.500h7" /></Glyph>
                <Glyph w={16} h={14} box="0 0 16 14" sw={2.400}><path strokeLinecap="butt" d="M2 12.500h12" /></Glyph>
                <Glyph size={14} sw={1.500} box="0 0 14 14"><path d="M1 5h8.500v8H1zM1 6h8.500M4 4.500V1.500h9v8h-3M4 2.300h9" /></Glyph>
                <Glyph size={14} sw={2.800} box="0 0 14 14"><path d="m3.500 3 7 8M10.500 3l-7 8" /></Glyph>
              </InnerButtons>
            </MenuBar>
            <ToolBar>
              <ToolGroup $gap={11}>{leftTools.map(([id, art, on]) => <Tool key={id} $dim={!on}><T>{art}</T></Tool>)}</ToolGroup>
              <ToolGroup $gap={567}><Tool $dim><T><path d="M1 9h8v15H1zM15 9h9v15h-9zM9 12h6M9 17h6M3 9V1h5v8M17 9V1h5v8" /></T></Tool></ToolGroup>
              {rightTools.map((g) => (
                <ToolGroup key={g.tools[0][0]} $gap={g.gap}>{g.tools.map(([id, art, on]) => <Tool key={id} $dim={!on}><T>{art}</T></Tool>)}</ToolGroup>
              ))}
            </ToolBar>
            <Workspace>
              <Shade />
              <MenuToggle />
              <Cockpit>
                <CockpitLine $indent={367}>Você pode adicionar widgets para</CockpitLine>
                <CockpitLine $indent={523}>desempenho co</CockpitLine>
                <CockpitLine $indent={338}>Você também pode tomar as medidas adequadas com base</CockpitLine>
                <CockpitLine $indent={559.500}>perspectiva obtida.</CockpitLine>
                <CockpitLine $indent={411}>Clique em<PlusGap><Glyph w={26} h={26} box="0 0 26 26" sw={2}><path d="M13 .5v25M.5 13h25" /></Glyph></PlusGap>para começar a utilizar o cockpit.</CockpitLine>
              </Cockpit>
              <CornerTools>
                <Glyph w={24} h={22} box="0 0 24 22" sw={2}><path d="m1 5 4.500 16h15.500l-3-14H8L6.500 5zM9 6V1.500h14l-2 18" /></Glyph>
                <Glyph size={22} sw={2} box="0 0 22 22"><circle cx="8.500" cy="8.500" r="7" /><path strokeWidth="3" d="m14 14 6.500 6.500" /></Glyph>
              </CornerTools>
              <ScrollThumb />
            </Workspace>
            <StatusBar>
              <StatusPair $w={873}><StatusField /><StatusField /></StatusPair>
              <StatusClock><span>18/08/2024</span><span>22:57</span></StatusClock>
              <StatusPair $w={366}><StatusField /><StatusField /></StatusPair>
              <StatusPair $w={362}><StatusField /><StatusField /></StatusPair>
              <SapBrand>
                <SapWord>SAP</SapWord>
                <SapProduct>Business<SapOne>One</SapOne></SapProduct>
              </SapBrand>
              <WindowButton>
                <svg width="24" height="24" viewBox="0 0 24 24"><path fill="#2c6596" d="M0 0h17v6L6 22H0z" /><path fill="#fdf6df" stroke="#c99f3c" strokeWidth="1.500" d="M5 6q4-2 7 0 4-3 8-1l2 2v12q-4-1-8 1-4-3-9-1z" /><path stroke="#5c8a3a" strokeWidth="2" d="M14 9h2M9 9h1" /><path stroke="#c03f2c" strokeWidth="2" d="M14 15h2" /><path stroke="#c99a25" strokeWidth="3.500" d="m11 14 8 8" /></svg>
                SAP Business One 10.0
              </WindowButton>
              <Grip />
            </StatusBar>
          </SapWindow>
        </Main>
      </Desktop>
      <TaskBar>
        {taskApps.map((a) => <TaskSlot key={a.name} $run={a.run}>{a.art}</TaskSlot>)}
        <Tray>
          <TrayClock>22:57<br />18/08/2024</TrayClock>
          <svg width="32" height="32" viewBox="0 0 32 32">
            <defs><linearGradient id="cop" x1="0" y1="0" x2="0.300" y2="1"><stop stopColor="#2a6cf0" /><stop offset=".45" stopColor="#25b5d8" /><stop offset="1" stopColor="#9ad83a" /></linearGradient><linearGradient id="cop2" x1="0" y1="0" x2="0.600" y2="1"><stop stopColor="#9a5cf0" /><stop offset="1" stopColor="#f2558d" /></linearGradient></defs>
            <path fill="url(#cop)" d="M10 2h9q2 0 3 3l1 3h-4q-3 0-4 3l-3 9q-1 3-4 3H5q-4 0-3-5l4-12q1-4 4-4z" />
            <path fill="url(#cop2)" d="M21 8h4q5 0 4 5l-3 8q-1 4-5 4h-8q3 0 4-3l3-10q1-3 1-4z" />
            <rect x="8" y="20" width="23" height="11" rx="2" fill="#ffc81e" />
            <text x="19.500" y="29" textAnchor="middle" fontFamily="Open Sans, sans-serif" fontWeight="800" fontSize="9" fill="#222">PRE</text>
          </svg>
        </Tray>
      </TaskBar>

      <Menu x={429} y={172} w={250} items={modules} />
      <Menu x={673} y={172} w={338} items={admin} />
      <Menu x={1004} y={272} w={271} items={setup} />
      <Menu x={1268} y={447} w={349} items={stock} />
      <RedFrame $x={429} $y={175} />
      <RedFrame $x={703} $y={274} />
      <RedFrame $x={1032} $y={448} />
      <RedFrame $x={1306} $y={448} />
    </Screen>
  );
}
